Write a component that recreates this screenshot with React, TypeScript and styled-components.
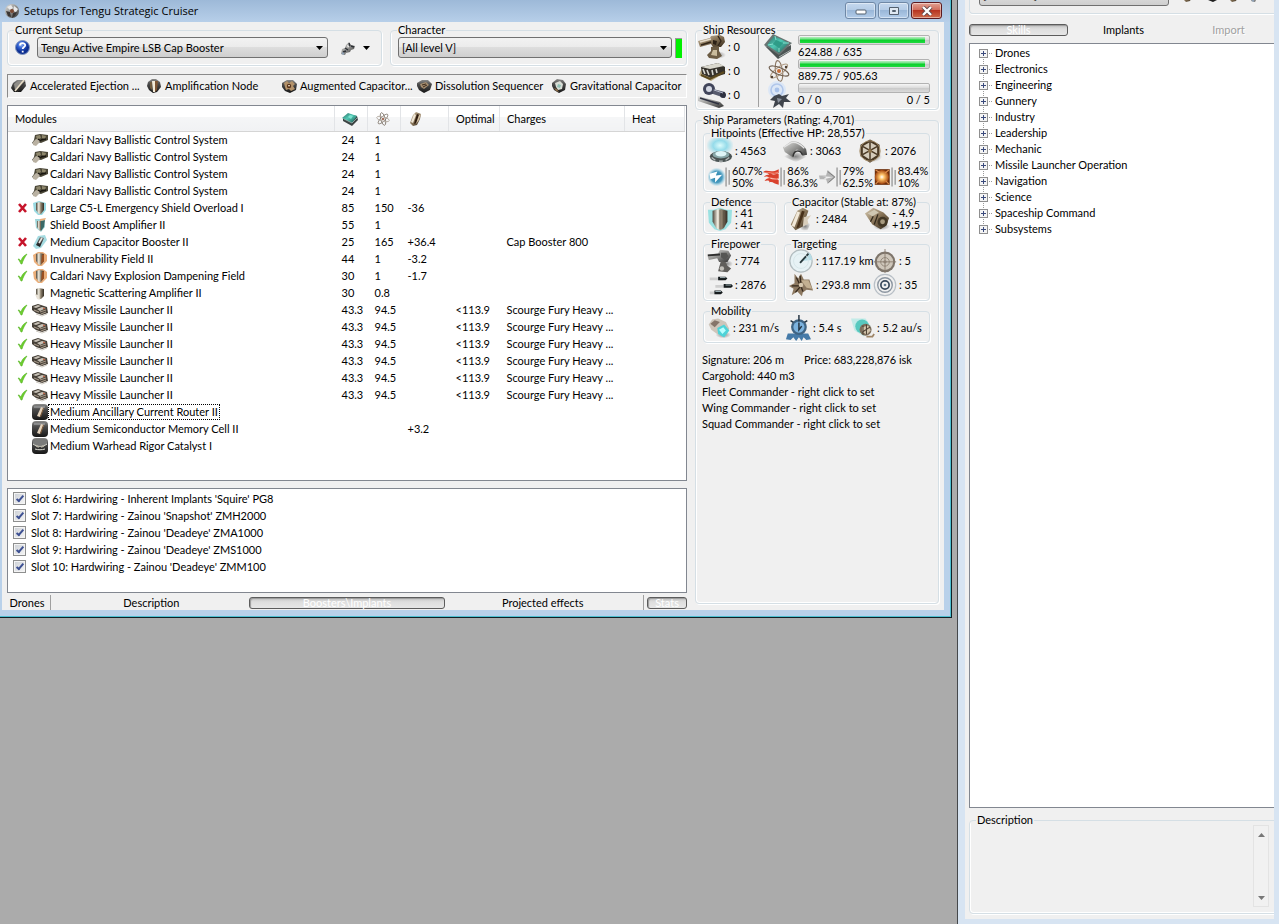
import React, { type ReactNode } from "react";
import styled, { createGlobalStyle, css } from "styled-components";

const GlobalStyle = createGlobalStyle`
  *, *::before, *::after { box-sizing: border-box; }
  body { margin: 0; background: #ababab; }
  body, button, select, input { font-family: Lato, "Liberation Sans", sans-serif; font-size: 11px; line-height: 14px; color: #000; }
`;

/* ---------- icons ---------- */

const Defs = styled.svg`
  position: absolute;
  width: 0;
  height: 0;
`;

const Gradients = () => (
  <Defs aria-hidden="true">
    <defs>
      <linearGradient id="steel" x1="0" y1="0" x2="1" y2="1">
        <stop offset="0" stopColor="#e4e4e2" />
        <stop offset=".5" stopColor="#8e8e8c" />
        <stop offset="1" stopColor="#2e2e2e" />
      </linearGradient>
      <linearGradient id="dark" x1="0" y1="0" x2="0" y2="1">
        <stop offset="0" stopColor="#8b8b8a" />
        <stop offset=".35" stopColor="#4b4b4b" />
        <stop offset="1" stopColor="#161616" />
      </linearGradient>
      <linearGradient id="bronze" x1="0" y1="0" x2="1" y2="1">
        <stop offset="0" stopColor="#d9cdb4" />
        <stop offset=".5" stopColor="#877357" />
        <stop offset="1" stopColor="#33281a" />
      </linearGradient>
      <linearGradient id="shield" x1="0" y1="0" x2="1" y2="0">
        <stop offset="0" stopColor="#4b4438" />
        <stop offset=".35" stopColor="#f4f0e4" />
        <stop offset=".6" stopColor="#8d816d" />
        <stop offset="1" stopColor="#332c22" />
      </linearGradient>
      <linearGradient id="teal" x1="0" y1="0" x2="1" y2="1">
        <stop offset="0" stopColor="#2c6660" />
        <stop offset=".45" stopColor="#4fc9b4" />
        <stop offset="1" stopColor="#1c4f4b" />
      </linearGradient>
      <radialGradient id="aqua">
        <stop offset="0" stopColor="#d8ffff" />
        <stop offset=".5" stopColor="#7ed6e8" />
        <stop offset="1" stopColor="#7ed6e8" stopOpacity="0" />
      </radialGradient>
      <radialGradient id="glow">
        <stop offset="0" stopColor="#1f7ba6" />
        <stop offset=".6" stopColor="#4b9cc0" />
        <stop offset="1" stopColor="#8fd0e6" stopOpacity="0" />
      </radialGradient>
      <radialGradient id="fire">
        <stop offset="0" stopColor="#ffffff" />
        <stop offset=".35" stopColor="#ffc46a" />
        <stop offset="1" stopColor="#a2430c" />
      </radialGradient>
      <radialGradient id="blue" cx=".4" cy=".3">
        <stop offset="0" stopColor="#9dbcf4" />
        <stop offset=".5" stopColor="#2f5fd0" />
        <stop offset="1" stopColor="#0d2f92" />
      </radialGradient>
      <radialGradient id="shade">
        <stop offset="0" stopColor="#000" stopOpacity=".45" />
        <stop offset="1" stopColor="#000" stopOpacity="0" />
      </radialGradient>
    </defs>
  </Defs>
);

const small = {
  app: (
    <>
      <circle cx="8" cy="8" r="7" fill="url(#steel)" />
      <path d="M3 4l4-2 2 3-3 2zM10 3l4 3-2 3-3-1z" fill="#e9e9e9" />
      <path d="M2 8l4 1 1 5-3-1zM9 10l4-1-2 4-3 2z" fill="#3a3533" />
      <circle cx="8" cy="8" r="2" fill="#7b4a35" />
    </>
  ),
  tools: (
    <>
      <path d="M1 14l1-5 3-1 1-3 3-3 2 3 4 1-1 3-3 1-1 2-4 1-1 2z" fill="url(#steel)" />
      <path d="M9 3l1 3M5 8l3 2M11 6l3 1M3 12l3-1" stroke="#2b2f35" strokeWidth="1.4" />
      <path d="M7 5l2 1-1 2z" fill="#fff" />
      <path d="M2 13l2 1" stroke="#8ea0b5" strokeWidth="2" />
    </>
  ),
  plate: (
    <>
      <path d="M2 5l4-3h8l1 6-5 6H3L0 10z" fill="url(#dark)" />
      <path d="M3 6l4-3h5L4 12z" fill="#8f8d88" />
      <path d="M13 2L4 13" stroke="#e8dcc4" strokeWidth="1.6" />
      <path d="M14 4L6 14" stroke="#35302a" />
    </>
  ),
  node: (
    <>
      <path d="M2 4l4-3h4l4 3 1 5-4 5-4 1-4-3-2-4z" fill="url(#dark)" />
      <path d="M6 3h3v11H7z" fill="#f3ead6" />
      <path d="M9 3h3l-1 9-2 2z" fill="#7c5534" />
      <path d="M4 4h2v8l-2-2z" fill="#6f5a3d" />
    </>
  ),
  gear: (
    <>
      <path d="M1 5l5-3 6 0 4 4-1 6-6 3-5-2-3-4z" fill="url(#dark)" />
      <path d="M3 5l3-2 2 2 3-2 3 3-2 2 2 3-4 2-2-2-3 1-1-3z" fill="#b3926a" />
      <circle cx="8" cy="8" r="2.2" fill="#59341c" />
      <path d="M7 7h2l-1 2z" fill="#fff2da" />
    </>
  ),
  sequencer: (
    <>
      <path d="M1 5l5-3 6 0 4 4-2 6-6 3-5-3-2-4z" fill="url(#dark)" />
      <path d="M4 6l6-2 3 3-5 4-3-2z" fill="#a58d6f" />
      <path d="M6 7l4-1M7 9l4-2" stroke="#3b2a1b" />
    </>
  ),
  gravity: (
    <>
      <path d="M1 5l5-4 6 1 3 4-1 6-6 3-5-3-2-4z" fill="url(#dark)" />
      <path d="M4 5l5-2 3 3-1 5-4 1-2-3z" fill="#d9ddd6" />
      <path d="M7 6l3 1-1 3-3-1z" fill="#8fbfb5" />
      <path d="M3 10l3 1 2 3-3-1z" fill="#8b6c49" />
    </>
  ),
  chip: (
    <>
      <path d="M1 8l5-5 9 2 1 4-6 6-9-5z" fill="#3c4444" />
      <path d="M0 7l6-5 9 3-5 7z" fill="url(#teal)" />
      <path d="M6 6l2-2 3 1-2 3z" fill="#7be3cf" />
      <path d="M2 8l8 4 5-5" stroke="#9fb5b1" strokeWidth=".8" fill="none" />
    </>
  ),
  atom: (
    <g fill="none" stroke="#857c72" strokeWidth=".9">
      <ellipse cx="8" cy="8" rx="2.2" ry="6.500" transform="rotate(-15 8 8)" />
      <ellipse cx="8" cy="8" rx="2.2" ry="6.500" transform="rotate(45 8 8)" />
      <ellipse cx="8" cy="8" rx="2.2" ry="6.500" transform="rotate(105 8 8)" stroke="#b4aca3" />
      <circle cx="8" cy="8" r="1.2" fill="#a5705a" stroke="none" />
    </g>
  ),
  cell: (
    <>
      <path d="M2 12l3-8 3-3 5 2-1 5-3 6-4 1z" fill="url(#bronze)" />
      <path d="M6 3l2 1-3 8-2-1z" fill="#efe6d5" />
      <path d="M9 3l2 1-3 8-2 1z" fill="#2b1a0d" />
      <path d="M11 4l2-1-2 6-3 4z" fill="#d2bfa3" />
    </>
  ),
  ballistic: (
    <>
      <path d="M3 3l5-1 8 1v5l-7 3-4-1-2 3-3-2 2-3z" fill="#4b4738" />
      <path d="M4 4l4-1 1 3-4 2zM10 3l4 1-1 3-3-1z" fill="#8e876c" />
      <path d="M1 10l3-3 4 1-1 3-3 3-3-1z" fill="#b9b1a2" />
      <path d="M9 8l5-1M6 7l3 2" stroke="#181510" strokeWidth="1.4" />
    </>
  ),
  shieldAqua: (
    <>
      <path d="M1 3l6-2 7 2v7l-4 5H6l-4-4z" fill="#7fd0d9" opacity=".8" />
      <path d="M4 3l4-1 4 1v7l-3 4H7l-3-4z" fill="url(#shield)" />
    </>
  ),
  shieldBoost: (
    <>
      <path d="M3 2h9l1 8-4 5-5-4z" fill="#9fd5d8" />
      <path d="M5 4h5v8l-2 2-3-4z" fill="url(#shield)" />
      <path d="M9 4l4-1-1 7-3 4z" fill="#3a6967" />
      <path d="M8 2l6-1-1 2-5 1z" fill="#e9ad7a" />
    </>
  ),
  cellAqua: (
    <>
      <path d="M1 12L6 2l7-1 2 5-6 8-5 1z" fill="#8ed2da" opacity=".8" />
      <path d="M4 11l4-8 4 1-4 9z" fill="url(#dark)" />
      <path d="M7 9l3-5" stroke="#e9e9e4" strokeWidth="1.6" />
    </>
  ),
  shieldOrange: (
    <>
      <path d="M1 4l5-3h5l4 3v6l-5 5H6l-4-4z" fill="#e8a56c" opacity=".9" />
      <path d="M4 3l4-1 4 1v7l-3 4H7l-3-4z" fill="url(#shield)" />
      <path d="M10 4l2-1v7l-3 3z" fill="#9a4f20" />
    </>
  ),
  shieldPlain: (
    <>
      <path d="M4 4l3-1 5 1v7l-3 3H7l-3-3z" fill="url(#shield)" />
      <path d="M3 9l2 5 3 1-2-5z" fill="#e9e3d8" />
    </>
  ),
  launcher: (
    <>
      <path d="M0 4l6-2 9 3 1 6-6 2-6-2-4-3z" fill="#453f37" />
      <path d="M1 5l5-2 3 1-5 2zM5 7l5-2 4 1-6 3z" fill="#c8c2b7" />
      <path d="M2 8l5 2M8 10l6-2M9 12l5-2" stroke="#a39686" strokeWidth="1.2" />
      <path d="M11 6l2 1" stroke="#c2512d" />
      <path d="M4 12l6 2 5-2" stroke="#cfcac2" fill="none" />
    </>
  ),
  rigCell: (
    <>
      <rect x="0" y="0" width="16" height="16" rx="4" fill="url(#dark)" />
      <path d="M2 2h11v2H2z" fill="#9fa0a2" opacity=".6" />
      <path d="M5 12l4-9 3 1-4 9z" fill="#e4d3bd" />
      <path d="M8 12l3-8 1 0-3 9z" fill="#755437" />
    </>
  ),
  rigMissile: (
    <>
      <rect x="0" y="0" width="16" height="16" rx="4" fill="url(#dark)" />
      <path d="M1 3c4-2 10-2 14 0v3c-4 2-10 2-14 0z" fill="#7a7b7a" />
      <path d="M1 6c4 3 10 3 14 0M3 11c3 1 7 1 10 0" stroke="#dfdfd5" fill="none" />
      <path d="M4 8l3 1M9 9l3-1" stroke="#b5b1a3" strokeWidth="1.4" />
    </>
  ),
  check: <path d="M3 8c2 0 2 1 3 2 1-3 2-5 6-7-2 3-4 6-5 10H6C5 11 4 9 3 8z" fill="#6ccf2c" stroke="#58b226" strokeWidth=".6" />,
  cross: <path d="M4 4l7 8M11 4l-7 8" stroke="#c6152b" strokeWidth="2.6" />,
};

const large = {
  turret: (
    <>
      <ellipse cx="19" cy="22" rx="9" ry="4" fill="url(#shade)" />
      <path d="M0 8l12-3 1-2 9-1 4 2 1 5-4 5-8 0-2-3-11 3z" fill="url(#bronze)" />
      <path d="M2 9l11-3" stroke="#e6dccb" strokeWidth="1.4" />
      <path d="M3 12l10-3M20 3l3 5-3 5" stroke="#33271a" strokeWidth="1.4" fill="none" />
      <path d="M13 14l8-1 0 5 3 5-5 3-8-1-2-3 4-4z" fill="#6c5c44" />
      <path d="M15 17l4 0v6l-6-1z" fill="#c9bb9c" />
      <path d="M15 7l4 1-1 4-3-1z" fill="#2c2116" />
    </>
  ),
  launcherBay: (
    <>
      <path d="M1 18l12 6 15-9-4-4H4z" fill="#b3a174" opacity=".9" />
      <path d="M3 10l17-4 7 4v7l-14 4-9-4z" fill="#35312b" />
      <path d="M3 10l17-4 6 3-14 3z" fill="#dad8ce" />
      <path d="M5 12l2 5M9 13l2 5M14 13l1 5M18 12l1 4" stroke="#d8d7cf" strokeWidth="1.6" />
      <path d="M3 18l9 4 14-7" stroke="#5c4a1f" strokeWidth="2" fill="none" />
    </>
  ),
  calibration: (
    <>
      <circle cx="11" cy="8" r="6" fill="#41455a" />
      <circle cx="11" cy="8" r="3" fill="#d5d9e4" />
      <path d="M15 8l12 3v6l-12-4z" fill="#575b6e" />
      <path d="M0 15l22 6 4 4-5 2L0 20z" fill="url(#steel)" />
      <path d="M2 17l19 6" stroke="#2e3140" strokeWidth="1.6" />
      <circle cx="25" cy="14" r="3" fill="#2e3140" />
      <path d="M16 9l9 3" stroke="#b3b8c9" />
    </>
  ),
  cpu: (
    <>
      <path d="M1 13L14 26 27 18l0-6L14 18z" fill="#4c5353" />
      <path d="M0 12L9 1l19 9-13 12z" fill="#687472" />
      <path d="M3 12l7-9 15 7-10 10z" fill="url(#teal)" />
      <path d="M9 11l3-4 7 3-4 5z" fill="#2f9c88" />
      <path d="M12 7l-1-4M19 10l6 0M15 15l0 4M9 11l-5 1" stroke="#8de5d2" strokeWidth=".9" />
      <path d="M15 24l12-7" stroke="#a7afad" />
    </>
  ),
  power: (
    <g fill="none" stroke="#8d7865" strokeWidth="1.1">
      <ellipse cx="15" cy="14" rx="3.500" ry="10.500" transform="rotate(-8 15 14)" />
      <ellipse cx="15" cy="14" rx="3.500" ry="10.500" transform="rotate(52 15 14)" stroke="#b09c86" />
      <ellipse cx="15" cy="14" rx="3.500" ry="10.500" transform="rotate(112 15 14)" stroke="#705f50" />
      <circle cx="15" cy="14" r="2" fill="#c56b36" stroke="none" />
      <circle cx="22" cy="10" r="1.2" fill="#4c3d30" stroke="none" />
      <circle cx="8" cy="20" r="1.2" fill="#4c3d30" stroke="none" />
    </g>
  ),
  drone: (
    <>
      <circle cx="13" cy="9" r="9" fill="#dce7f6" />
      <circle cx="13" cy="9" r="6" fill="none" stroke="#b0c6ea" strokeWidth="1.6" />
      <circle cx="13" cy="9" r="2.4" fill="#a9c2ea" />
      <path d="M10 15l5-2 3 2 7-2-3 4 5 4-7 0-1 6-4-4-6 4 2-7-5-1z" fill="#3f444c" />
      <path d="M13 17l5 1-4 4z" fill="#8b929d" />
    </>
  ),
  shieldHp: (
    <>
      <ellipse cx="14" cy="8" rx="15" ry="11" fill="url(#aqua)" opacity=".8" />
      <ellipse cx="15" cy="20" rx="12" ry="6" fill="#4a5353" />
      <ellipse cx="15" cy="18" rx="9" ry="4" fill="#88a7a8" />
      <ellipse cx="15" cy="17" rx="6" ry="3" fill="#dff6f8" />
      <path d="M5 21l4 3M20 24l4-3M13 25h4" stroke="#b6bcbc" strokeWidth="1.4" />
    </>
  ),
  armorHp: (
    <>
      <path d="M2 20l13 6 12-6-13-6z" fill="url(#shade)" />
      <path d="M1 10L9 4c6-2 13 2 17 8l1 6-5 1c-1-5-4-7-7-6l-3 8L3 15z" fill="url(#steel)" />
      <path d="M2 10l8-5c5-1 10 2 14 6" stroke="#e5e5e5" fill="none" strokeWidth="1.4" />
      <path d="M12 20c0-6 7-9 10-2" stroke="#333" fill="none" strokeWidth="1.6" />
    </>
  ),
  hullHp: (
    <>
      <ellipse cx="17" cy="20" rx="10" ry="6" fill="url(#shade)" />
      <path d="M14 3l9 5v11l-9 6-9-6V8z" fill="#d5ccbc" stroke="#4a3925" strokeWidth="2.6" />
      <path d="M14 4v20M6 9l16 9M22 9L6 18" stroke="#4a3925" strokeWidth="1.6" />
      <circle cx="14" cy="14" r="2.2" fill="#8d744f" />
      <circle cx="14" cy="14" r="11" fill="none" stroke="#a58f6c" />
    </>
  ),
  em: (
    <>
      <circle cx="11" cy="14" r="12" fill="url(#glow)" />
      <path d="M2 10l10-3-2 5 8-1-9 10 0-6-6 2z" fill="#fff" />
      <path d="M23 2v24M27 5v19" stroke="#a5a5a5" strokeWidth="2" />
    </>
  ),
  thermal: (
    <>
      <path d="M0 8c5-5 9 2 20-4v5c-5 2-7 1-10 1 4 2 7 0 10 0v6c-5 2-8-2-11 0 4 2 8 0 11 2v6c-6-1-8-5-12-3 1-3-3-3-6-2 2-3 4-3 6-4-2-2-5-2-7-1 2-3 5-3 7-3-2-2-5-3-8-3z" fill="#d9412c" />
      <path d="M4 9c5-2 8 2 15-1M5 16c5-3 8 2 14 0" stroke="#ff9d84" fill="none" />
      <path d="M23 2v24M27 5v19" stroke="#a5a5a5" strokeWidth="2" />
    </>
  ),
  kinetic: (
    <>
      <path d="M0 12h9l2-7 10 9-10 9-2-6H1z" fill="#b5b5b5" />
      <path d="M4 13l14 1-12 3 3-3z" fill="#efefef" />
      <path d="M11 7l9 7-8 7" stroke="#6f6f6f" fill="none" />
      <path d="M23 2v24M27 5v19" stroke="#a5a5a5" strokeWidth="2" />
    </>
  ),
  explosive: (
    <>
      <path d="M1 4h19v20H1z" fill="#6c2f0c" />
      <circle cx="10" cy="14" r="9" fill="url(#fire)" />
      <path d="M2 5l5 3M19 5l-5 4M2 23l4-4M19 23l-4-4" stroke="#d98a4b" strokeWidth="1.6" />
      <path d="M23 2v24M27 5v19" stroke="#a5a5a5" strokeWidth="2" />
    </>
  ),
  defence: (
    <>
      <path d="M1 4l6 0 7-2 7 2 6 0-1 14-6 7-6 2-6-2-6-7z" fill="#7edcdc" opacity=".75" />
      <path d="M6 5l8-2 8 2v12l-4 7-4 2-4-2-4-7z" fill="url(#shield)" />
      <path d="M14 4v21M18 5v18" stroke="#605846" />
    </>
  ),
  capacitor: (
    <>
      <path d="M15 22l10-5-4 9-9 1z" fill="url(#shade)" />
      <path d="M3 20L10 5l6-3 6 3-6 17-8 4z" fill="url(#bronze)" />
      <path d="M10 6l3 1-6 16-3-2z" fill="#f2e9d9" />
      <path d="M15 5l3 1-6 17-3 1z" fill="#473019" />
      <path d="M17 12l8-2-4 5 1 4-6 3z" fill="#d8cdbb" />
    </>
  ),
  recharge: (
    <>
      <ellipse cx="19" cy="22" rx="9" ry="4" fill="url(#shade)" />
      <path d="M1 8l9-6 11 5 6 6-3 8-6 4-9-5z" fill="url(#bronze)" />
      <path d="M4 8l7-4 5 3-7 4z" fill="#cfc7b2" />
      <circle cx="20" cy="17" r="5.500" fill="#423725" />
      <circle cx="20" cy="17" r="2.6" fill="#a79a7f" />
      <path d="M10 11l-3 6M15 9l-4 11" stroke="#332a1c" strokeWidth="1.4" />
    </>
  ),
  gun: (
    <>
      <ellipse cx="21" cy="17" rx="7" ry="4" fill="url(#shade)" />
      <path d="M0 7l12-1 2-4 9 1 3 5-4 7-9 0-2-4-9 2z" fill="url(#steel)" />
      <path d="M1 8l13-1" stroke="#2e2e2e" strokeWidth="2" />
      <path d="M15 5h6l2 4-4 4-4-3z" fill="#565654" />
      <path d="M15 14l5 1 2 4 4 3-4 4-10-1 1-4z" fill="#605e5b" />
      <circle cx="16" cy="22" r="2.4" fill="#c2c0ba" />
    </>
  ),
  volley: (
    <>
      <path d="M3 6h14v3H3zM9 14h14v3H9zM3 21h11v3H3z" fill="#9b9b9b" opacity=".4" />
      <path d="M12 5h8l2 2-2 2h-8zM18 13h8l2 2-2 2h-8zM8 20h7l2 2-2 2H8z" fill="#161b1d" />
      <path d="M14 6h6M20 14h6M9 21h6" stroke="#a6b9bd" />
    </>
  ),
  range: (
    <>
      <circle cx="14" cy="14" r="12" fill="#e7f2f5" stroke="#b3bdc0" strokeWidth="1.4" />
      <path d="M14 14L23 5a12 12 0 0 1 3 8z" fill="#b8dde6" />
      <path d="M13 16L22 6" stroke="#28383c" strokeWidth="2" />
      <circle cx="14" cy="14" r="8" fill="none" stroke="#d6e5e8" />
    </>
  ),
  targets: (
    <>
      <circle cx="14" cy="15" r="12" fill="#7e756b" />
      <circle cx="14" cy="15" r="9.500" fill="#cfc7bb" />
      <circle cx="14" cy="15" r="5" fill="none" stroke="#8e8375" />
      <path d="M14 0v28M1 15h26" stroke="#85796b" />
      <circle cx="14" cy="15" r="2" fill="#8e8275" />
    </>
  ),
  scan: (
    <>
      <path d="M7 2l4 5 3-5 3 6 6 0 4 12-7-1-4 3-1 4-5-5-6 4 2-7-5-3 6-3z" fill="#8c7860" />
      <path d="M14 9l8 0 4 9-6-1z" fill="#c3b092" />
      <path d="M9 6l4 8M13 4l1 10M4 15l9 0M8 22l6-7M16 21l-2-6" stroke="#35281c" strokeWidth="1.4" />
      <circle cx="14" cy="14" r="2.4" fill="#d8c9b0" />
    </>
  ),
  sensor: (
    <g fill="none">
      <circle cx="14" cy="14" r="12.500" stroke="#b8bfc6" strokeWidth="1.4" />
      <circle cx="14" cy="14" r="8.500" stroke="#8b95a0" strokeWidth="1.6" />
      <circle cx="14" cy="14" r="4.800" stroke="#39485a" strokeWidth="2" />
      <circle cx="14" cy="14" r="1.6" fill="#5f7487" />
    </g>
  ),
  speed: (
    <>
      <ellipse cx="19" cy="22" rx="9" ry="4" fill="url(#shade)" />
      <path d="M2 10l4-6 7-1 9 4 4 8-5 9-8-2-8-6z" fill="#cec5ba" />
      <path d="M4 9l5-4 6 2-6 6z" fill="#85756a" />
      <path d="M12 14l8-4 6 7-6 8-7-4z" fill="#4fd3d8" />
      <path d="M14 16l5-3 3 4-4 4z" fill="#b9ffff" />
    </>
  ),
  align: (
    <>
      <path d="M3 20h22l3 6-5 1-3-3-2 4-3-4-3 4-3-4-3 3-5-1z" fill="#457aa8" />
      <circle cx="15" cy="13" r="8.500" fill="#3f6484" />
      <circle cx="15" cy="13" r="6" fill="#7bb2de" />
      <path d="M15 0v7M15 8v8l3-4M9 8l-3-2M21 8l3-2" stroke="#263543" strokeWidth="1.6" fill="none" />
    </>
  ),
  warp: (
    <>
      <path d="M0 3l17 0 6 9-8 12L4 17z" fill="#aee8e4" opacity=".7" />
      <circle cx="13" cy="12" r="8" fill="#58c9bf" />
      <circle cx="17" cy="16" r="7" fill="#7d6f5c" />
      <path d="M13 13l7-2 3 6-5 5-5-4z" fill="#d3c5ac" />
      <path d="M14 11v11M18 10v12M22 13l-9 6" stroke="#4b3f31" strokeWidth="1.2" />
      <path d="M18 24h7l2-3" stroke="#9e8566" strokeWidth="2" fill="none" />
    </>
  ),
};

type SmallName = keyof typeof small;
type LargeName = keyof typeof large;

const IconSvg = styled.svg<{ $size: number }>`
  flex: none;
  display: block;
  width: ${(p) => p.$size}px;
  height: ${(p) => p.$size}px;
`;

const Icon = ({ name }: { name: SmallName }) => (
  <IconSvg $size={16} viewBox="0 0 16 16" aria-hidden="true">{small[name]}</IconSvg>
);
const BigIcon = ({ name, size = 26 }: { name: LargeName; size?: number }) => (
  <IconSvg $size={size} viewBox="0 0 28 28" aria-hidden="true">{large[name]}</IconSvg>
);

/* ---------- shared parts ---------- */

const Desktop = styled.div`
  display: flex;
  align-items: flex-start;
  gap: 5px;
  height: 100vh;
  overflow: hidden;
`;

const GroupFrame = styled.fieldset`
  min-width: 0;
  margin: 0;
  padding: 0 7px;
  border: 1px solid #d5dfe5;
  border-radius: 4px;
  box-shadow: inset 1px -1px #fff, 1px 1px #fff;
`;
const Legend = styled.legend`
  margin-left: -1px;
  padding: 0 1px;
  line-height: 10px;
  height: 10px;
  white-space: nowrap;
`;
const Group = ({ title, className, children }: { title: string; className?: string; children?: ReactNode }) => (
  <GroupFrame className={className}>
    <Legend>{title}</Legend>
    {children}
  </GroupFrame>
);

const ComboWrap = styled.div`
  position: relative;
  flex: 1;
  min-width: 0;
`;
const ComboBox = styled.select`
  appearance: none;
  display: block;
  width: 100%;
  height: 21px;
  padding: 0 20px 0 3px;
  border: 1px solid #707070;
  border-radius: 3px;
  background: linear-gradient(#f2f2f2, #ebebeb 50%, #dddddd 50%, #cfcfcf);
`;
const ComboArrow = styled.svg`
  position: absolute;
  right: 5px;
  top: 9px;
  width: 7px;
  height: 4px;
  pointer-events: none;
`;
const Arrow = () => <path d="M0 0h7L3.500 4z" fill="#000" />;
const Combo = ({ label, value }: { label: string; value: string }) => (
  <ComboWrap>
    <ComboBox aria-label={label}><option>{value}</option></ComboBox>
    <ComboArrow viewBox="0 0 7 4"><Arrow /></ComboArrow>
  </ComboWrap>
);

const Tab = styled.button<{ $active?: boolean; $width?: number }>`
  flex: ${(p) => (p.$width ? `0 0 ${p.$width}px` : "1 1 0")};
  display: flex;
  align-items: center;
  justify-content: center;
  height: 13px;
  padding: 0;
  border: 0;
  background: none;
  white-space: nowrap;
  &:disabled { color: #a0a0a0; text-shadow: 1px 1px #fff; }
  ${(p) => p.$active && css`
    height: 12px;
    color: #fff;
    border: 1px solid #5c5c5c;
    border-radius: 3px;
    background: linear-gradient(#c4c4c4, #dedede 40%, #e6e6e6);
    box-shadow: inset 1px 1px 1px #9a9a9a;
  `}
`;

/* ---------- setup window ---------- */

const SetupWindow = styled.section`
  flex: 1;
  min-width: 0;
  background: #b9d1ea;
  border-right: 1px solid #102127;
  border-bottom: 1px solid #102127;
  box-shadow: inset -1px -1px #4dbfd0;
  padding: 0 7px 7px 2px;
`;
const TitleBar = styled.header`
  display: flex;
  align-items: center;
  gap: 4px;
  height: 22px;
  margin: 0 -6px 0 -2px;
  padding: 0 8px 0 4px;
  background: linear-gradient(#9db9d8, #b7cfe9);
  font-family: "Open Sans", "Noto Sans", sans-serif;
`;
const Title = styled.h1`
  flex: 1;
  margin: 0;
  font-size: 11px;
  font-weight: 400;
`;
const CaptionButtons = styled.div`
  display: flex;
  align-self: flex-start;
  gap: 2px;
  padding-top: 2px;
`;
const CaptionButton = styled.button<{ $close?: boolean }>`
  display: grid;
  place-items: center;
  width: 31px;
  height: 17px;
  padding: 0;
  border: 1px solid ${(p) => (p.$close ? "#5c1a1f" : "#6f88a6")};
  border-radius: 3px;
  box-shadow: inset 0 0 0 1px rgba(255, 255, 255, 0.45);
  background: ${(p) => (p.$close
    ? "linear-gradient(#e2a193, #cf6a59 48%, #b73522 50%, #cf6b4b)"
    : "linear-gradient(#c5d8ee, #b3cbe6 48%, #9ab7d8 50%, #b3cdea)")};
`;
const Body = styled.div`
  display: flex;
  gap: 8px;
  padding: 3px 5px 0;
  background: #f0f0f0;
`;
const MainColumn = styled.div`
  flex: 1;
  min-width: 0;
  display: flex;
  flex-direction: column;
`;
const SideColumn = styled.div`
  flex: 0 0 244px;
  display: flex;
  flex-direction: column;
  gap: 5px;
  padding-bottom: 6px;
`;

const PickerRow = styled.div`
  display: grid;
  grid-template-columns: 375fr 297fr;
  gap: 8px;
`;
const Picker = styled.div`
  display: flex;
  align-items: center;
  gap: 7px;
  padding: 2px 0 7px;
`;
const HelpButton = styled.button`
  padding: 0;
  border: 0;
  background: none;
`;
const SetupMenuButton = styled.button`
  display: flex;
  align-items: center;
  gap: 7px;
  margin: 0 4px 0 5px;
  padding: 0;
  border: 0;
  background: none;
  svg:last-child { width: 7px; height: 4px; }
`;
const CharacterPicker = styled(Picker)`
  gap: 3px;
  margin-right: -3px;
`;
const StatusLamp = styled.span`
  width: 7px;
  height: 20px;
  border-left: 1px solid #9a9a9a;
  border-top: 1px solid #9a9a9a;
  background: #00f000;
`;

const Subsystems = styled.div`
  display: grid;
  grid-template-columns: repeat(5, 1fr);
  margin-top: 8px;
  height: 24px;
  padding-left: 3px;
  border: 1px solid #fff;
  border-top-color: #8a8a8a;
  border-left-color: #8a8a8a;
`;
const Subsystem = styled.button`
  display: flex;
  align-items: center;
  gap: 3px;
  min-width: 0;
  padding: 0;
  border: 0;
  background: none;
  white-space: nowrap;
`;

const ListPanel = styled.div`
  border: 1px solid #828790;
  background: #fff;
`;
const ModulePanel = styled(ListPanel)`
  margin-top: 7px;
  height: 376px;
  padding-right: 1px;
`;
const ModuleTable = styled.table`
  width: 100%;
  table-layout: fixed;
  border-collapse: collapse;
`;
const HeadCell = styled.th`
  height: 25px;
  padding: 1px 0 0 7px;
  border-right: 1px solid #e2e4e7;
  border-bottom: 1px solid #d5d5d5;
  background: linear-gradient(#fff 45%, #f5f6f7 45%, #f1f2f4);
  font-weight: 400;
  text-align: left;
`;
const Cell = styled.td`
  height: 17px;
  padding: 0 0 0 7px;
  white-space: nowrap;
`;
const ModuleName = styled.div`
  display: flex;
  align-items: center;
`;
const StateSlot = styled.span`
  flex: none;
  width: 17px;
  height: 16px;
`;
const Label = styled.span<{ $focused?: boolean }>`
  padding: 0 1px;
  border: 1px dotted ${(p) => (p.$focused ? "#000" : "transparent")};
  line-height: 14px;
`;

const ImplantPanel = styled(ListPanel)`
  margin-top: 7px;
  height: 105px;
  padding: 1px 5px;
`;
const ImplantRow = styled.label`
  display: flex;
  align-items: center;
  gap: 5px;
  height: 17px;
`;
const Check = styled.input`
  appearance: none;
  display: grid;
  place-items: center;
  width: 13px;
  height: 13px;
  margin: 0;
  border: 1px solid #8e8f8f;
  background: linear-gradient(135deg, #cbcfd5, #f6f6f6);
  box-shadow: inset 0 0 0 1px #f4f4f4;
  &:checked::after {
    content: "";
    width: 4px;
    height: 8px;
    border: solid #3d5092;
    border-width: 0 2px 2px 0;
    transform: rotate(40deg);
    margin-bottom: 2px;
  }
`;

const BottomTabs = styled.nav`
  display: flex;
  align-items: center;
  height: 17px;
  padding-top: 2px;
`;
const TabRule = styled.span`
  width: 1px;
  height: 15px;
  margin: 0 3px;
  background: #a0a0a0;
`;

/* ---------- statistics ---------- */

const Resources = styled.div`
  display: flex;
  padding-bottom: 2px;
  margin: 0 1px 0 -5px;
`;
const HardpointList = styled.div`
  width: 61px;
  border-right: 1px solid #a0a0a0;
`;
const Gauges = styled.div`
  flex: 1;
  padding-left: 5px;
`;
const StatRow = styled.div`
  display: flex;
  align-items: center;
  gap: 2px;
  height: 24px;
  white-space: nowrap;
`;
const GaugeRow = styled(StatRow)`
  gap: 6px;
`;
const GaugeBody = styled.div`
  flex: 1;
`;
const Bar = styled.div`
  height: 10px;
  padding: 1px;
  border: 1px solid #b2b2b2;
  border-radius: 2px;
  background: linear-gradient(#f6f6f6, #dcdcdc 45%, #c9c9c9 50%, #dadada);
`;
const BarFill = styled.div`
  height: 6px;
  background: linear-gradient(#b3efbd, #6fe083 35%, #0ad02b 50%, #1fd93f);
`;
const GaugeText = styled.div`
  display: flex;
  justify-content: space-between;
  line-height: 14px;
`;

const ParamsGroup = styled(Group)`
  flex: 1;
`;
const Params = styled.div`
  display: grid;
  grid-template-columns: 73px 1fr;
  gap: 5px 8px;
  padding-top: 3px;
  margin-right: 1px;
`;
const WideGroup = styled(Group)`
  grid-column: 1 / -1;
`;
const StatGrid = styled.div<{ $cols: string; $rows: number }>`
  display: grid;
  grid-template-columns: ${(p) => p.$cols};
  grid-template-rows: repeat(${(p) => p.$rows}, 24px);
  margin: 0 -7px 0 -4px;
  padding: 0 0 ${(p) => (p.$rows > 1 ? 3 : 2)}px;
`;
const HitpointGrid = styled(StatGrid)`
  padding: 1px 0;
`;
const ResistRow = styled.div`
  display: grid;
  grid-template-columns: repeat(4, 1fr);
  margin: 1px -7px 2px -3px;
`;
const Pair = styled.div`
  line-height: 12px;
`;

const Notes = styled.div`
  margin: 9px -7px 0;
  padding-left: 6px;
  line-height: 16px;
`;
const NoteLine = styled.div`
  display: flex;
  gap: 20px;
`;

/* ---------- skills window ---------- */

const SkillWindow = styled.section`
  flex: 0 0 322px;
  min-width: 0;
  display: flex;
  height: 100%;
  border-left: 1px solid #45484b;
  background: #d7e4f2;
  padding: 0 5px 5px 7px;
`;
const SkillBody = styled.div`
  flex: 1;
  min-width: 0;
  display: flex;
  flex-direction: column;
  padding: 0 0 5px 4px;
  background: #f0f0f0;
  overflow: hidden;
`;
const SkillPicker = styled.div`
  flex: none;
  display: flex;
  align-items: center;
  height: 45px;
  margin-top: -31px;
  padding: 7px 0 0 9px;
  border: 1px solid #d5dfe5;
  border-right: 0;
  border-radius: 0 0 0 4px;
  box-shadow: 0 1px #fff;
`;
const SkillCombo = styled.div`
  flex: 0 0 190px;
`;
const SkillTools = styled.div`
  display: flex;
  gap: 7px;
  padding-left: 12px;
`;
const SkillTabs = styled.nav`
  flex: none;
  display: flex;
  align-items: center;
  gap: 6px;
  height: 29px;
  padding-top: 2px;
`;
const Tree = styled.ul`
  flex: 1;
  margin: 0;
  padding: 1px 0 0 9px;
  border: 1px solid #828790;
  border-right: 0;
  background: #fff;
  list-style: none;
`;
const TreeRow = styled.li`
  display: flex;
  align-items: center;
  height: 16px;
  white-space: nowrap;
`;
const TreeToggle = styled.svg`
  flex: none;
  width: 16px;
  height: 16px;
`;
const DescriptionGroup = styled(Group)`
  flex: none;
  height: 99px;
  margin-top: 7px;
  margin-right: -4px;
`;
const ScrollTrack = styled.div`
  display: flex;
  flex-direction: column;
  justify-content: space-between;
  align-items: center;
  width: 16px;
  height: 82px;
  margin: 0 1px 0 auto;
  padding: 7px 0 6px;
  border: 1px solid #e3e3e3;
  background: #f1f1f1;
`;
const ScrollArrow = styled.svg`
  width: 7px;
  height: 4px;
`;

/* ---------- data ---------- */

type State = "check" | "cross" | undefined;
type Module = [State, SmallName, string, string, string, string?, string?, string?];
const repeat = (n: number, m: Module): Module[] => Array.from({ length: n }, () => m);

const modules: Module[] = [
  ...repeat(4, [undefined, "ballistic", "Caldari Navy Ballistic Control System", "24", "1"]),
  ["cross", "shieldAqua", "Large C5-L Emergency Shield Overload I", "85", "150", "-36"],
  [undefined, "shieldBoost", "Shield Boost Amplifier II", "55", "1"],
  ["cross", "cellAqua", "Medium Capacitor Booster II", "25", "165", "+36.4", "", "Cap Booster 800"],
  ["check", "shieldOrange", "Invulnerability Field II", "44", "1", "-3.2"],
  ["check", "shieldOrange", "Caldari Navy Explosion Dampening Field", "30", "1", "-1.7"],
  [undefined, "shieldPlain", "Magnetic Scattering Amplifier II", "30", "0.8"],
  ...repeat(6, ["check", "launcher", "Heavy Missile Launcher II", "43.3", "94.5", "", "<113.9", "Scourge Fury Heavy ..."]),
  [undefined, "rigCell", "Medium Ancillary Current Router II", "", ""],
  [undefined, "rigCell", "Medium Semiconductor Memory Cell II", "", "", "+3.2"],
  [undefined, "rigMissile", "Medium Warhead Rigor Catalyst I", "", ""],
];

const subsystems: [SmallName, string][] = [
  ["plate", "Accelerated Ejection ..."],
  ["node", "Amplification Node"],
  ["gear", "Augmented Capacitor..."],
  ["sequencer", "Dissolution Sequencer"],
  ["gravity", "Gravitational Capacitor"],
];

const implants = [
  "Slot 6: Hardwiring - Inherent Implants 'Squire' PG8",
  "Slot 7: Hardwiring - Zainou 'Snapshot' ZMH2000",
  "Slot 8: Hardwiring - Zainou 'Deadeye' ZMA1000",
  "Slot 9: Hardwiring - Zainou 'Deadeye' ZMS1000",
  "Slot 10: Hardwiring - Zainou 'Deadeye' ZMM100",
];

const skills = [
  "Drones", "Electronics", "Engineering", "Gunnery", "Industry", "Leadership", "Mechanic",
  "Missile Launcher Operation", "Navigation", "Science", "Spaceship Command", "Subsystems",
];

const resists: [LargeName, string, string][] = [
  ["em", "60.7%", "50%"],
  ["thermal", "86%", "86.3%"],
  ["kinetic", "79%", "62.5%"],
  ["explosive", "83.4%", "10%"],
];

const gauges: [LargeName, number, string, string?][] = [
  ["cpu", 98, "624.88 / 635"],
  ["power", 98, "889.75 / 905.63"],
  ["drone", 0, "0 / 0", "0 / 5"],
];

const Stat = ({ icon, size, children }: { icon: LargeName; size?: number; children: ReactNode }) => (
  <StatRow><BigIcon name={icon} size={size} />{children}</StatRow>
);

/* ---------- sections ---------- */

const ModuleList = () => (
  <ModulePanel>
    <ModuleTable>
      <colgroup>
        <col />
        <col style={{ width: 33 }} />
        <col style={{ width: 33 }} />
        <col style={{ width: 48 }} />
        <col style={{ width: 51 }} />
        <col style={{ width: 125 }} />
        <col style={{ width: 60 }} />
      </colgroup>
      <thead>
        <tr>
          <HeadCell>Modules</HeadCell>
          <HeadCell aria-label="CPU"><Icon name="chip" /></HeadCell>
          <HeadCell aria-label="Powergrid"><Icon name="atom" /></HeadCell>
          <HeadCell aria-label="Capacitor"><Icon name="cell" /></HeadCell>
          <HeadCell>Optimal</HeadCell>
          <HeadCell>Charges</HeadCell>
          <HeadCell>Heat</HeadCell>
        </tr>
      </thead>
      <tbody>
        {modules.map(([state, icon, name, ...values], i) => (
          <tr key={i}>
            <Cell>
              <ModuleName>
                <StateSlot>{state && <Icon name={state} />}</StateSlot>
                <Icon name={icon} />
                <Label $focused={i === 16}>{name}</Label>
              </ModuleName>
            </Cell>
            {[0, 1, 2, 3, 4, 5].map((c) => <Cell key={c}>{values[c]}</Cell>)}
          </tr>
        ))}
      </tbody>
    </ModuleTable>
  </ModulePanel>
);

const ShipStats = () => (
  <SideColumn>
    <Group title="Ship Resources">
      <Resources>
        <HardpointList>
          {(["turret", "launcherBay", "calibration"] as LargeName[]).map((n) => (
            <Stat key={n} icon={n} size={28}>: 0</Stat>
          ))}
        </HardpointList>
        <Gauges>
          {gauges.map(([icon, percent, left, right]) => (
            <GaugeRow key={icon}>
              <BigIcon name={icon} size={28} />
              <GaugeBody>
                <Bar><BarFill style={{ width: `${percent}%` }} /></Bar>
                <GaugeText><span>{left}</span><span>{right}</span></GaugeText>
              </GaugeBody>
            </GaugeRow>
          ))}
        </Gauges>
      </Resources>
    </Group>

    <ParamsGroup title="Ship Parameters (Rating: 4,701)">
      <Params>
        <WideGroup title="Hitpoints (Effective HP: 28,557)">
          <HitpointGrid $cols="75px 75px 1fr" $rows={1}>
            <Stat icon="shieldHp">: 4563</Stat>
            <Stat icon="armorHp">: 3063</Stat>
            <Stat icon="hullHp">: 2076</Stat>
          </HitpointGrid>
          <ResistRow>
            {resists.map(([icon, a, b]) => (
              <StatRow key={icon}>
                <BigIcon name={icon} size={22} />
                <Pair><div>{a}</div><div>{b}</div></Pair>
              </StatRow>
            ))}
          </ResistRow>
        </WideGroup>
        <Group title="Defence">
          <StatGrid $cols="1fr" $rows={1}>
            <Stat icon="defence"><Pair><div>: 41</div><div>: 41</div></Pair></Stat>
          </StatGrid>
        </Group>
        <Group title="Capacitor (Stable at: 87%)">
          <StatGrid $cols="76px 1fr" $rows={1}>
            <Stat icon="capacitor">: 2484</Stat>
            <Stat icon="recharge"><Pair><div>- 4.9</div><div>+19.5</div></Pair></Stat>
          </StatGrid>
        </Group>
        <Group title="Firepower">
          <StatGrid $cols="1fr" $rows={2}>
            <Stat icon="gun">: 774</Stat>
            <Stat icon="volley">: 2876</Stat>
          </StatGrid>
        </Group>
        <Group title="Targeting">
          <StatGrid $cols="85px 1fr" $rows={2}>
            <Stat icon="range">: 117.19 km</Stat>
            <Stat icon="targets" size={24}>: 5</Stat>
            <Stat icon="scan">: 293.8 mm</Stat>
            <Stat icon="sensor" size={24}>: 35</Stat>
          </StatGrid>
        </Group>
        <WideGroup title="Mobility">
          <StatGrid $cols="78px 66px 1fr" $rows={1}>
            <Stat icon="speed" size={24}>: 231 m/s</Stat>
            <Stat icon="align">: 5.4 s</Stat>
            <Stat icon="warp" size={24}>: 5.2 au/s</Stat>
          </StatGrid>
        </WideGroup>
      </Params>
      <Notes>
        <NoteLine><span>Signature: 206 m</span><span>Price: 683,228,876 isk</span></NoteLine>
        <div>Cargohold: 440 m3</div>
        <div>Fleet Commander - right click to set</div>
        <div>Wing Commander - right click to set</div>
        <div>Squad Commander - right click to set</div>
      </Notes>
    </ParamsGroup>
  </SideColumn>
);

const SetupPane = () => (
  <SetupWindow>
    <TitleBar>
      <Icon name="app" />
      <Title>Setups for Tengu Strategic Cruiser</Title>
      <CaptionButtons>
        <CaptionButton aria-label="Minimize">
          <svg width="12" height="8"><rect x="1" y="3" width="10" height="4" rx="1" fill="#fff" stroke="#53606e" /></svg>
        </CaptionButton>
        <CaptionButton aria-label="Maximize">
          <svg width="12" height="10"><path d="M1.500 1.500h9v7h-9zM4.500 4.500h3v1h-3z" fill="#dfe8f2" stroke="#53606e" /></svg>
        </CaptionButton>
        <CaptionButton aria-label="Close" $close>
          <svg width="12" height="10"><path d="M2 1l8 8M10 1L2 9" stroke="#5f4648" strokeWidth="4" /><path d="M2 1l8 8M10 1L2 9" stroke="#fff" strokeWidth="2.4" /></svg>
        </CaptionButton>
      </CaptionButtons>
    </TitleBar>
    <Body>
      <MainColumn>
        <PickerRow>
          <Group title="Current Setup">
            <Picker>
              <HelpButton aria-label="Help">
                <IconSvg $size={15} viewBox="0 0 15 15">
                  <circle cx="7.500" cy="7.500" r="7" fill="url(#blue)" stroke="#7f94bd" />
                  <path d="M5 5.500c0-3 5.200-3 5.200-.2 0 1.800-2.500 1.700-2.500 3.700M7.700 10.700v1.800" stroke="#fff" strokeWidth="1.800" fill="none" />
                </IconSvg>
              </HelpButton>
              <Combo label="Current setup" value="Tengu Active Empire LSB Cap Booster" />
              <SetupMenuButton aria-label="Setup actions">
                <Icon name="tools" />
                <svg viewBox="0 0 7 4"><Arrow /></svg>
              </SetupMenuButton>
            </Picker>
          </Group>
          <Group title="Character">
            <CharacterPicker>
              <Combo label="Character" value="[All level V]" />
              <StatusLamp />
            </CharacterPicker>
          </Group>
        </PickerRow>
        <Subsystems>
          {subsystems.map(([icon, name]) => (
            <Subsystem key={name}><Icon name={icon} />{name}</Subsystem>
          ))}
        </Subsystems>
        <ModuleList />
        <ImplantPanel>
          {implants.map((name) => (
            <ImplantRow key={name}><Check type="checkbox" defaultChecked />{name}</ImplantRow>
          ))}
        </ImplantPanel>
        <BottomTabs>
          <Tab $width={40}>Drones</Tab>
          <TabRule />
          <Tab>Description</Tab>
          <Tab $active>Boosters\Implants</Tab>
          <Tab>Projected effects</Tab>
          <TabRule />
          <Tab $active $width={40}>Stats</Tab>
        </BottomTabs>
      </MainColumn>
      <ShipStats />
    </Body>
  </SetupWindow>
);

const SkillPane = () => (
  <SkillWindow>
    <SkillBody>
      <SkillPicker>
        <SkillCombo><Combo label="Skill set" value="[All level V]" /></SkillCombo>
        <SkillTools>
          <Icon name="cell" /><Icon name="gear" /><Icon name="cell" /><Icon name="tools" />
        </SkillTools>
      </SkillPicker>
      <SkillTabs>
        <Tab $active $width={99}>Skills</Tab>
        <Tab $width={99}>Implants</Tab>
        <Tab $width={99} disabled>Import</Tab>
      </SkillTabs>
      <Tree>
        {skills.map((name, i) => (
          <TreeRow key={name}>
            <TreeToggle viewBox="0 0 16 16">
              <path d={`M4.500 ${i ? 0 : 8}V${i < skills.length - 1 ? 16 : 8}M10 8.500h4`} stroke="#9a9a9a" strokeDasharray="1 1" />
              <rect x=".5" y="4.500" width="8" height="8" fill="#f4f4f4" stroke="#8f8f8f" />
              <path d="M2 8.500h5M4.500 6v5" stroke="#3a4a7c" />
            </TreeToggle>
            {name}
          </TreeRow>
        ))}
      </Tree>
      <DescriptionGroup title="Description">
        <ScrollTrack>
          <ScrollArrow viewBox="0 0 7 4"><path d="M0 4h7L3.500 0z" fill="#777" /></ScrollArrow>
          <ScrollArrow viewBox="0 0 7 4"><path d="M0 0h7L3.500 4z" fill="#777" /></ScrollArrow>
        </ScrollTrack>
      </DescriptionGroup>
    </SkillBody>
  </SkillWindow>
);

export default function App() {
  return (
    <>
      <GlobalStyle />
      <Gradients />
      <Desktop>
        <SetupPane />
        <SkillPane />
      </Desktop>
    </>
  );
}
